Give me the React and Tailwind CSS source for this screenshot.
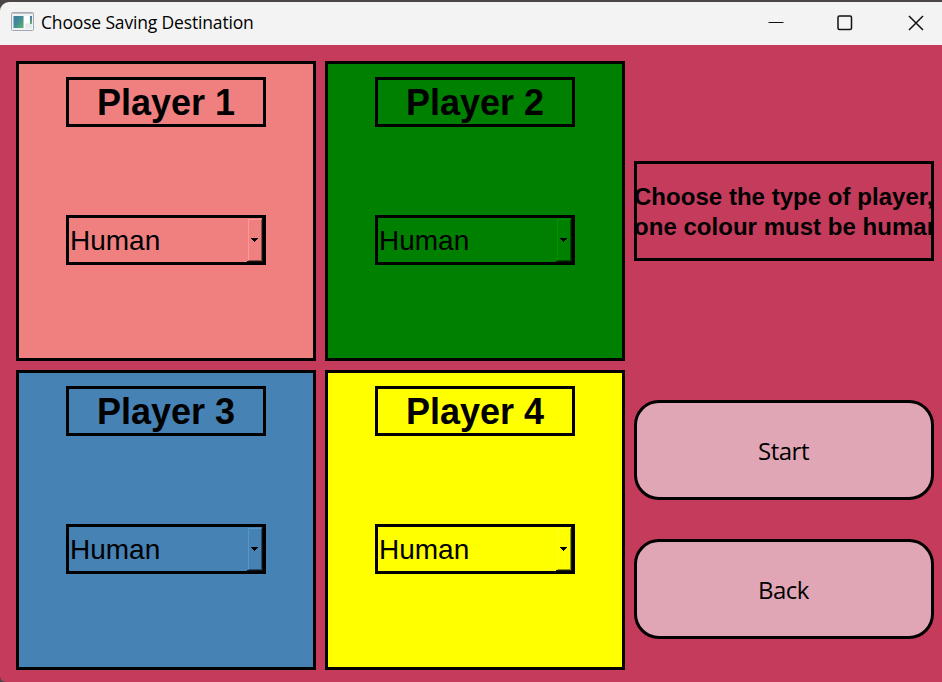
const players = [
  {
    name: "Player 1",
    panel: "bg-[#f08080]",
    bevel: "border-t-[#fb9a9a] border-l-[#fb9a9a] border-r-[#8a4a4a] border-b-[#8a4a4a]",
    edge: "border-[#1c0f0f]",
  },
  {
    name: "Player 2",
    panel: "bg-[#008000]",
    bevel: "border-t-[#009400] border-l-[#009400] border-r-[#004a00] border-b-[#004a00]",
    edge: "border-[#001c00]",
  },
  {
    name: "Player 3",
    panel: "bg-[#4682b4]",
    bevel: "border-t-[#5596cd] border-l-[#5596cd] border-r-[#284b68] border-b-[#284b68]",
    edge: "border-[#0a131b]",
  },
  {
    name: "Player 4",
    panel: "bg-[#ffff00]",
    bevel: "border-t-[#ffff26] border-l-[#ffff26] border-r-[#949400] border-b-[#949400]",
    edge: "border-[#1c1c00]",
  },
];

function AppIcon() {
  return (
    <svg width="23" height="19" viewBox="0 0 23 19" className="block shrink-0">
      <defs>
        <linearGradient id="screen" x1="0" y1="0" x2="1" y2="1">
          <stop offset="0" stopColor="#3d7a9f" />
          <stop offset="0.5" stopColor="#428f94" />
          <stop offset="1" stopColor="#62b56c" />
        </linearGradient>
        <linearGradient id="strip" x1="0" y1="0" x2="0" y2="1">
          <stop offset="0" stopColor="#4873b5" />
          <stop offset="1" stopColor="#62b56c" />
        </linearGradient>
      </defs>
      <rect x="0.5" y="0.5" width="22" height="18" rx="1" fill="#f1f2f3" stroke="#a2a9b0" />
      <path d="M1 1.5h21" stroke="#bdc4cc" />
      <rect x="2.5" y="4" width="10" height="12" fill="url(#screen)" />
      <path d="M13.5 4v12" stroke="#fff" />
      <rect x="14" y="4" width="4" height="7" fill="#fff" />
      <rect x="19" y="4" width="2" height="8" fill="url(#strip)" />
      <rect x="14" y="12" width="7" height="4" fill="#e8e9ea" />
    </svg>
  );
}

function TitleBar() {
  return (
    <header className="flex h-[43px] shrink-0 items-center rounded-tl-[9px] bg-[#f3f3f3] pb-1 pl-[11px] pr-[18px]">
      <AppIcon />
      <h1 className="ml-[7px] whitespace-nowrap font-['Open_Sans',sans-serif] text-[17.5px] leading-[22px] tracking-[-0.16px] text-black">
        Choose Saving Destination
      </h1>
      <div className="ml-auto flex items-center pt-0.5 text-[#111]">
        <svg className="mr-[53px]" width="16" height="16" viewBox="0 0 16 16" fill="none" stroke="currentColor">
          <path d="M0.5 7.5h15" />
        </svg>
        <svg className="mr-[55px]" width="16" height="16" viewBox="0 0 16 16" fill="none" stroke="currentColor" strokeWidth="1.5">
          <rect x="1" y="1" width="13.5" height="13.5" rx="1.5" />
        </svg>
        <svg width="16" height="16" viewBox="0 0 16 16" fill="none" stroke="currentColor" strokeWidth="1.5">
          <path d="M1 1l14 14M15 1L1 15" />
        </svg>
      </div>
    </header>
  );
}

function PlayerPanel({ name, panel, bevel, edge }) {
  return (
    <section className={`flex h-[300px] w-[300px] flex-col items-center border-[3px] border-black pt-[13px] ${panel}`}>
      <h2 className="h-[50px] w-[200px] border-[3px] border-black text-center text-[36px] font-bold leading-[46px]">
        {name}
      </h2>
      <button className="mt-[88px] flex h-[50px] w-[200px] border-[3px] border-black text-left">
        <span className="flex-1 pl-px text-[28px] leading-[46px]">Human</span>
        <span className={`flex h-[44px] w-4 border-r border-b pt-px pl-px ${edge}`}>
          <span className={`flex flex-1 items-center justify-center border pr-px ${bevel}`}>
            <svg width="7" height="4" viewBox="0 0 7 4" shapeRendering="crispEdges">
              <path d="M0 0h7v1H0zM1 1h5v1H1zM2 2h3v1H2zM3 3h1v1H3z" />
            </svg>
          </span>
        </span>
      </button>
    </section>
  );
}

function ActionButton({ children }) {
  return (
    <button className="h-[100px] w-[300px] rounded-[25px] border-[3px] border-black bg-[#e0a6b5] pt-0.5 pr-px text-center font-['Open_Sans',sans-serif] text-[24px] leading-[30px] tracking-[-0.5px]">
      {children}
    </button>
  );
}

export default function App() {
  return (
    <div className="flex h-[682px] w-[942px] flex-col overflow-hidden bg-[#4a4646] pt-0.5 font-['Liberation_Sans',Arial,sans-serif] text-black">
      <TitleBar />
      <main className="flex flex-1 gap-[9px] rounded-bl-[6px] bg-[#c53b5c] pt-4 pl-4">
        <div className="grid grid-cols-[300px_300px] content-start gap-[9px]">
          {players.map((player) => (
            <PlayerPanel key={player.name} {...player} />
          ))}
        </div>
        <aside className="flex w-[300px] flex-col pt-[100px]">
          <div className="flex h-[100px] flex-col items-start justify-center overflow-hidden border-[3px] border-black pt-0.5 text-[24px] font-bold leading-[30px] tracking-[0.03px]">
            <p className="-ml-[3px] whitespace-nowrap">Choose the type of player,</p>
            <p className="-ml-[3px] whitespace-nowrap">one colour must be human</p>
          </div>
          <div className="mt-[139px] flex flex-col gap-[39px]">
            <ActionButton>Start</ActionButton>
            <ActionButton>Back</ActionButton>
          </div>
        </aside>
      </main>
    </div>
  );
}
